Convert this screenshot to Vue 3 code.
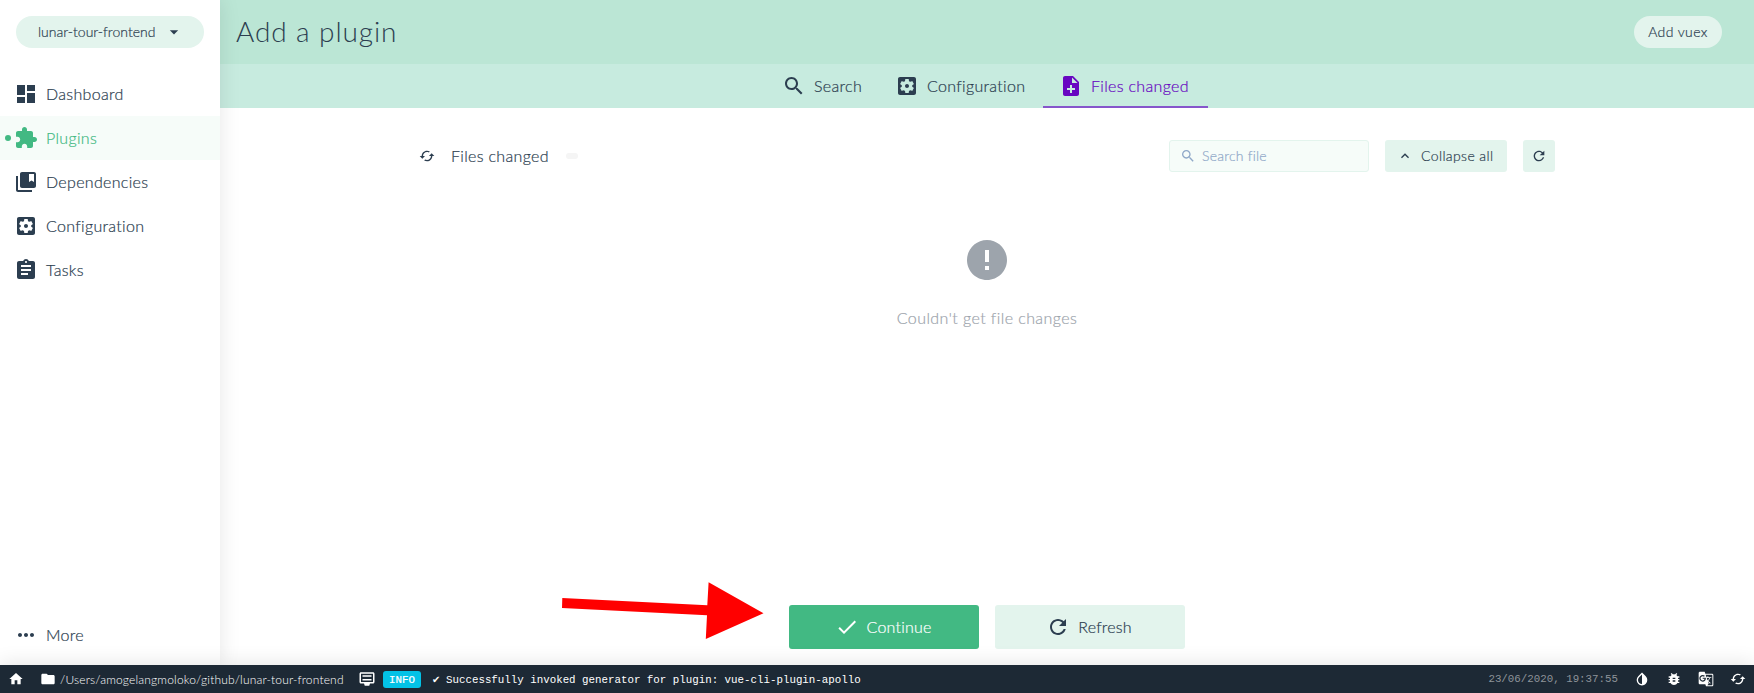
<script setup>
const paths = {
  dashboard: 'M3 13h8V3H3v10zm0 8h8v-6H3v6zm10 0h8V11h-8v10zm0-18v6h8V3h-8z',
  plugin: 'M20.500 11H19V7c0-1.100-.9-2-2-2h-4V3.500C13 2.120 11.880 1 10.500 1S8 2.120 8 3.500V5H4c-1.100 0-1.990.9-1.990 2v3.800H3.500c1.490 0 2.700 1.210 2.700 2.700s-1.210 2.700-2.700 2.700H2V20c0 1.100.9 2 2 2h3.800v-1.500c0-1.490 1.210-2.700 2.700-2.700 1.490 0 2.700 1.210 2.700 2.700V22H17c1.100 0 2-.9 2-2v-4h1.500c1.380 0 2.500-1.120 2.500-2.500S21.880 11 20.500 11z',
  deps: 'M4 6H2v14c0 1.100.9 2 2 2h14v-2H4V6zm16-4H8c-1.100 0-2 .9-2 2v12c0 1.100.9 2 2 2h12c1.100 0 2-.9 2-2V4c0-1.100-.9-2-2-2zm0 10l-2.500-1.500L15 12V4h5v8z',
  config: 'M12 10c-1.100 0-2 .9-2 2s.9 2 2 2 2-.9 2-2-.9-2-2-2zm7-7H5c-1.110 0-2 .9-2 2v14c0 1.100.89 2 2 2h14c1.110 0 2-.9 2-2V5c0-1.100-.89-2-2-2zm-1.750 9c0 .23-.02.46-.05.68l1.480 1.160c.13.11.17.3.08.45l-1.400 2.420c-.09.15-.27.21-.43.15l-1.740-.7c-.36.28-.76.51-1.180.69l-.26 1.850c-.03.17-.18.3-.35.3h-2.800c-.17 0-.32-.13-.35-.29l-.26-1.850c-.43-.18-.82-.41-1.180-.69l-1.740.7c-.16.06-.34 0-.43-.15l-1.400-2.420c-.09-.15-.05-.34.08-.45l1.480-1.160c-.03-.23-.05-.46-.05-.69 0-.23.02-.46.05-.68l-1.480-1.160c-.13-.11-.17-.3-.08-.45l1.400-2.420c.09-.15.27-.21.43-.15l1.740.7c.36-.28.76-.51 1.180-.69l.26-1.850c.03-.17.18-.3.35-.3h2.800c.17 0 .32.13.35.29l.26 1.850c.43.18.82.41 1.180.69l1.740-.7c.16-.06.34 0 .43.15l1.400 2.420c.09.15.05.34-.08.45l-1.480 1.160c.03.23.05.46.05.69z',
  tasks: 'M19 3h-4.180C14.400 1.840 13.300 1 12 1c-1.300 0-2.400.84-2.820 2H5c-1.100 0-2 .9-2 2v14c0 1.100.9 2 2 2h14c1.100 0 2-.9 2-2V5c0-1.100-.9-2-2-2zm-7 0c.55 0 1 .45 1 1s-.45 1-1 1-1-.45-1-1 .45-1 1-1zm2 14H7v-2h7v2zm3-4H7v-2h10v2zm0-4H7V7h10v2z',
  more: 'M6 10c-1.100 0-2 .9-2 2s.9 2 2 2 2-.9 2-2-.9-2-2-2zm12 0c-1.100 0-2 .9-2 2s.9 2 2 2 2-.9 2-2-.9-2-2-2zm-6 0c-1.100 0-2 .9-2 2s.9 2 2 2 2-.9 2-2-.9-2-2-2z',
  search: 'M15.500 14h-.79l-.28-.27C15.410 12.590 16 11.110 16 9.500 16 5.910 13.090 3 9.500 3S3 5.910 3 9.500 5.910 16 9.500 16c1.610 0 3.090-.59 4.230-1.570l.27.28v.79l5 4.990L20.490 19l-4.990-5zm-6 0C7.010 14 5 11.990 5 9.500S7.010 5 9.500 5 14 7.010 14 9.500 11.990 14 9.500 14z',
  file: 'M14 2H6c-1.100 0-1.990.9-1.990 2L4 20c0 1.100.89 2 1.990 2H18c1.100 0 2-.9 2-2V8l-6-6zm2 14h-3v3h-2v-3H8v-2h3v-3h2v3h3v2zm-3-7V3.500L18.500 9H13z',
  sync: 'M19 8l-4 4h3c0 3.310-2.690 6-6 6-1.010 0-1.970-.25-2.800-.7l-1.460 1.460C8.970 19.540 10.430 20 12 20c4.420 0 8-3.580 8-8h3l-4-4zM6 12c0-3.310 2.690-6 6-6 1.010 0 1.970.25 2.800.7l1.460-1.460C15.030 4.460 13.570 4 12 4c-4.420 0-8 3.580-8 8H1l4 4 4-4H6z',
  up: 'M12 8l-6 6 1.410 1.410L12 10.830l4.590 4.580L18 14z',
  down: 'M7 10l5 5 5-5z',
  refresh: 'M17.650 6.350C16.200 4.900 14.210 4 12 4c-4.420 0-7.990 3.580-7.990 8s3.570 8 7.990 8c3.730 0 6.840-2.550 7.730-6h-2.080c-.82 2.330-3.040 4-5.650 4-3.310 0-6-2.690-6-6s2.690-6 6-6c1.660 0 3.140.69 4.220 1.780L13 11h7V4l-2.350 2.350z',
  error: 'M12 2C6.480 2 2 6.480 2 12s4.480 10 10 10 10-4.480 10-10S17.520 2 12 2zm1 15h-2v-2h2v2zm0-4h-2V7h2v6z',
  check: 'M9 16.170L4.830 12l-1.420 1.410L9 19 21 7l-1.410-1.410z',
  home: 'M10 20v-6h4v6h5v-8h3L12 3 2 12h3v8z',
  folder: 'M10 4H4c-1.100 0-1.990.9-1.990 2L2 18c0 1.100.9 2 2 2h16c1.100 0 2-.9 2-2V8c0-1.100-.9-2-2-2h-8l-2-2z',
  log: 'M20 3H4c-1.100 0-2 .9-2 2v11c0 1.100.9 2 2 2h4l1 3h6l1-3h4c1.100 0 2-.9 2-2V5c0-1.100-.9-2-2-2zm0 13H4V5h16v11zM6 7h12v2H6zM6 12h12v2H6z',
  contrast: 'M17.660 7.930L12 2.270 6.340 7.930c-3.120 3.120-3.120 8.190 0 11.310C7.900 20.800 9.950 21.580 12 21.580c2.050 0 4.100-.78 5.660-2.340 3.120-3.120 3.120-8.190 0-11.310zM12 19.590c-1.600 0-3.110-.62-4.240-1.760C6.620 16.690 6 15.190 6 13.590s.62-3.110 1.760-4.240L12 5.100v14.490z',
  bug: 'M20 8h-2.810c-.45-.78-1.070-1.450-1.820-1.960L17 4.410 15.590 3l-2.170 2.170C12.960 5.060 12.490 5 12 5c-.49 0-.96.06-1.410.17L8.410 3 7 4.410l1.620 1.630C7.880 6.550 7.260 7.220 6.810 8H4v2h2.090c-.05.33-.09.66-.09 1v1H4v2h2v1c0 .34.04.67.09 1H4v2h2.810c1.040 1.790 2.970 3 5.190 3s4.150-1.210 5.190-3H20v-2h-2.090c.05-.33.09-.66.09-1v-1h2v-2h-2v-1c0-.34-.04-.67-.09-1H20V8zm-6 8h-4v-2h4v2zm0-4h-4v-2h4v2z',
  translate: 'M21 4H11l-1-3H3c-1.100 0-2 .9-2 2v15c0 1.100.9 2 2 2h8l1 3h9c1.100 0 2-.9 2-2V6c0-1.100-.9-2-2-2zM7 16c-2.760 0-5-2.240-5-5s2.240-5 5-5c1.350 0 2.480.5 3.350 1.300L9.030 8.570c-.38-.36-1.040-.78-2.030-.78-1.740 0-3.150 1.440-3.150 3.210S5.260 14.210 7 14.210c2.010 0 2.840-1.440 2.920-2.410H7v-1.710h4.680c.07.31.12.61.12 1.020C11.800 13.970 9.890 16 7 16zm6.170-5.420h3.700c-.43 1.250-1.110 2.430-2.050 3.470-.31-.35-.6-.72-.86-1.100l-.79-2.370zm8.330 9.920c0 .55-.45 1-1 1H14l2-2.500-1.040-3.100 3.100 3.100.92-.92-3.300-3.250.02-.02c1.130-1.250 1.930-2.690 2.400-4.220H20v-1.300h-4.530V8h-1.290v1.290h-1.440L11.460 5.500h9.040c.55 0 1 .45 1 1v14z',
}
const nav = [
  { icon: 'dashboard', label: 'Dashboard' },
  { icon: 'plugin', label: 'Plugins', cls: 'active' },
  { icon: 'deps', label: 'Dependencies' },
  { icon: 'config', label: 'Configuration' },
  { icon: 'tasks', label: 'Tasks' },
]
const tabs = [
  { icon: 'search', label: 'Search', cls: 't1' },
  { icon: 'config', label: 'Configuration', cls: 't2' },
  { icon: 'file', label: 'Files changed', cls: 't3 active' },
]
</script>

<template>
  <div class="app">
    <div class="body">
      <aside class="sidebar">
        <div class="project">
          <span class="project-name">lunar-tour-frontend</span>
          <svg class="i20" viewBox="0 0 24 24"><path :d="paths.down" /></svg>
        </div>
        <nav>
          <div v-for="n in nav" :key="n.label" class="nav-item" :class="n.cls">
            <svg class="i24" viewBox="0 0 24 24"><path :d="paths[n.icon]" /></svg>
            <span>{{ n.label }}</span>
          </div>
        </nav>
        <div class="nav-item more">
          <svg class="i24" viewBox="0 0 24 24"><path :d="paths.more" /></svg>
          <span>More</span>
        </div>
      </aside>
      <main class="main">
        <header class="header">
          <h1>Add a plugin</h1>
          <div class="add"><span>Add vuex</span></div>
        </header>
        <div class="tabs">
          <div v-for="t in tabs" :key="t.label" class="tab" :class="t.cls">
            <svg class="i24" viewBox="0 0 24 24"><path :d="paths[t.icon]" /></svg>
            <span>{{ t.label }}</span>
          </div>
        </div>
        <section class="content">
          <div class="toolbar">
            <svg class="i16" viewBox="0 0 24 24"><path :d="paths.sync" /></svg>
            <span class="title">Files changed</span>
            <i class="count"></i>
            <div class="field">
              <svg class="i16" viewBox="0 0 24 24"><path :d="paths.search" /></svg>
              <span>Search file</span>
            </div>
            <div class="btn collapse">
              <svg class="i16" viewBox="0 0 24 24"><path :d="paths.up" /></svg>
              <span>Collapse all</span>
            </div>
            <div class="btn reload">
              <svg class="i16" viewBox="0 0 24 24"><path :d="paths.refresh" /></svg>
            </div>
          </div>
          <div class="empty">
            <svg class="i48" viewBox="0 0 24 24"><path :d="paths.error" /></svg>
            <span>Couldn't get file changes</span>
          </div>
          <div class="actions">
            <div class="big primary">
              <svg class="i24" viewBox="0 0 24 24"><path :d="paths.check" /></svg>
              <span>Continue</span>
            </div>
            <div class="big">
              <svg class="i24" viewBox="0 0 24 24"><path :d="paths.refresh" /></svg>
              <span>Refresh</span>
            </div>
          </div>
        </section>
      </main>
    </div>
    <footer class="status">
      <svg class="i16 home" viewBox="0 0 24 24"><path :d="paths.home" /></svg>
      <svg class="i16 folder" viewBox="0 0 24 24"><path :d="paths.folder" /></svg>
      <span class="path">/Users/amogelangmoloko/github/lunar-tour-frontend</span>
      <svg class="i18 log" viewBox="0 0 24 24"><path :d="paths.log" /></svg>
      <span class="info">INFO</span>
      <span class="tick">✔</span>
      <span class="message">Successfully invoked generator for plugin: vue-cli-plugin-apollo</span>
      <span class="date">23/06/2020, 19:37:55</span>
      <svg v-for="k in ['contrast', 'bug', 'translate', 'sync']" :key="k" class="i16 tool" viewBox="0 0 24 24"><path :d="paths[k]" /></svg>
    </footer>
    <svg class="arrow" viewBox="0 0 202 58"><path d="M.3 16L145.300 23.300L146.600.3L201.500 31.300L143.800 57L145 33.300L0 26Z" /></svg>
  </div>
</template>

<style>
body { margin: 0; overflow: hidden; }
</style>

<style scoped>
.app { position: relative; width: 1754px; height: 693px; display: flex; flex-direction: column; overflow: hidden; background: #fff; color: #2c3e50; font-family: Lato, "Open Sans", sans-serif; font-weight: 300; font-size: 16px; letter-spacing: .32px; -webkit-text-stroke: .2px currentColor; }
.app * { box-sizing: border-box; }
svg { fill: currentColor; flex: none; display: block; }
span { white-space: nowrap; flex: none; }
.i16 { width: 16px; height: 16px; }
.i18 { width: 18px; height: 18px; }
.i20 { width: 20px; height: 20px; }
.i24 { width: 24px; height: 24px; }
.i48 { width: 48px; height: 48px; }
.nav-item span, .tab span, .title, .big span, .btn span, .field span, .add span, .project span { padding-bottom: 2px; }
.body { display: flex; height: 665px; }
.sidebar { position: relative; z-index: 1; width: 220px; display: flex; flex-direction: column; background: #fff; box-shadow: 0 0 20px rgba(0, 0, 0, .1); }
.project { height: 32px; margin: 16px 16px 24px; padding: 0 20px 0 22px; border-radius: 16px; background: #e3f4ed; display: flex; align-items: center; justify-content: space-between; font-size: 14px; }
.project-name { letter-spacing: .02px; }
.nav-item { position: relative; height: 44px; padding-left: 14px; display: flex; align-items: center; gap: 8px; }
.nav-item.active { color: #42b983; background: #f6fcf9; }
.nav-item.active::before { content: ""; position: absolute; left: 5px; top: 19px; width: 6px; height: 6px; border-radius: 50%; background: #42b983; }
.more { margin: auto 0 8px; }
.main { flex: 1; display: flex; flex-direction: column; }
.header { height: 64px; background: #bbe6d5; display: flex; align-items: center; justify-content: space-between; padding: 0 32px 0 16px; }
h1 { margin: 0; padding-bottom: 3px; font-weight: 300; font-size: 28px; letter-spacing: .9px; -webkit-text-stroke: 0; }
.add { width: 88px; height: 32px; border-radius: 16px; background: #e3f4ed; font-size: 14px; letter-spacing: .4px; display: flex; align-items: center; justify-content: center; }
.tabs { height: 44px; background: #c7ebdf; display: flex; justify-content: center; }
.tab { height: 44px; display: flex; align-items: center; gap: 8px; padding: 0 18px 0 16px; }
.t1 { width: 114px; }
.t2 { width: 163px; padding-left: 15px; }
.t3 { width: 165px; }
.tab.active { color: #6806c1; border-bottom: 2px solid #8656cb; padding-top: 2px; }
.content { flex: 1; display: flex; flex-direction: column; padding: 32px 199px 16px; }
.toolbar { height: 32px; display: flex; align-items: center; }
.title { width: 98px; margin-left: 16px; }
.count { width: 12px; height: 6px; margin-left: 17px; border-radius: 3px; background: #f5f5f5; }
.field { width: 200px; height: 32px; margin-left: auto; border: 1px solid #e3f4ed; border-radius: 3px; background: #f6fcf9; color: #8fa8c8; display: flex; align-items: center; padding-left: 10px; gap: 6px; font-size: 14px; letter-spacing: .22px; }
.btn { height: 32px; margin-left: 16px; border-radius: 3px; background: #e3f4ed; display: flex; align-items: center; font-size: 14px; letter-spacing: .38px; }
.collapse { width: 122px; padding-left: 12px; gap: 8px; }
.reload { width: 32px; justify-content: center; }
.empty { margin-top: 64px; display: flex; flex-direction: column; align-items: center; gap: 24px; color: #9da4ac; letter-spacing: .42px; }
.actions { margin-top: auto; display: flex; justify-content: center; gap: 16px; }
.big { width: 190px; height: 44px; padding-right: 2px; border-radius: 3px; background: #e3f4ed; display: flex; align-items: center; justify-content: center; gap: 8px; letter-spacing: .2px; }
.primary { background: #42b983; color: #fff; }
.status { position: relative; z-index: 2; height: 28px; background: #1d2935; color: #fff; display: flex; align-items: center; padding: 0 8px; box-shadow: 0 -2px 20px rgba(0, 0, 0, .1); font-size: 12px; letter-spacing: 0; -webkit-text-stroke: 0; }
.folder { margin-left: 16px; }
.path { width: 283px; margin-left: 4px; letter-spacing: .17px; }
.log { margin-left: 15px; }
.info { width: 38px; height: 17px; margin-left: 7px; border-radius: 3px; background: #03c2e6; font: 400 10.8px/18px "Liberation Mono", monospace; text-align: center; -webkit-text-stroke: .2px currentColor; }
.tick { width: 14px; margin-left: 11px; font: 10px "DejaVu Sans", sans-serif; }
.message { padding-top: 2px; font: 400 10.8px "Liberation Mono", monospace; }
.date { margin-left: auto; font: 400 10.8px "Liberation Mono", monospace; color: #8e949a; }
.tool { margin-left: 16px; }
</style>

<style scoped>
.arrow { position: absolute; z-index: 3; left: 562px; top: 582px; width: 202px; height: 58px; fill: #f00; }
</style>
